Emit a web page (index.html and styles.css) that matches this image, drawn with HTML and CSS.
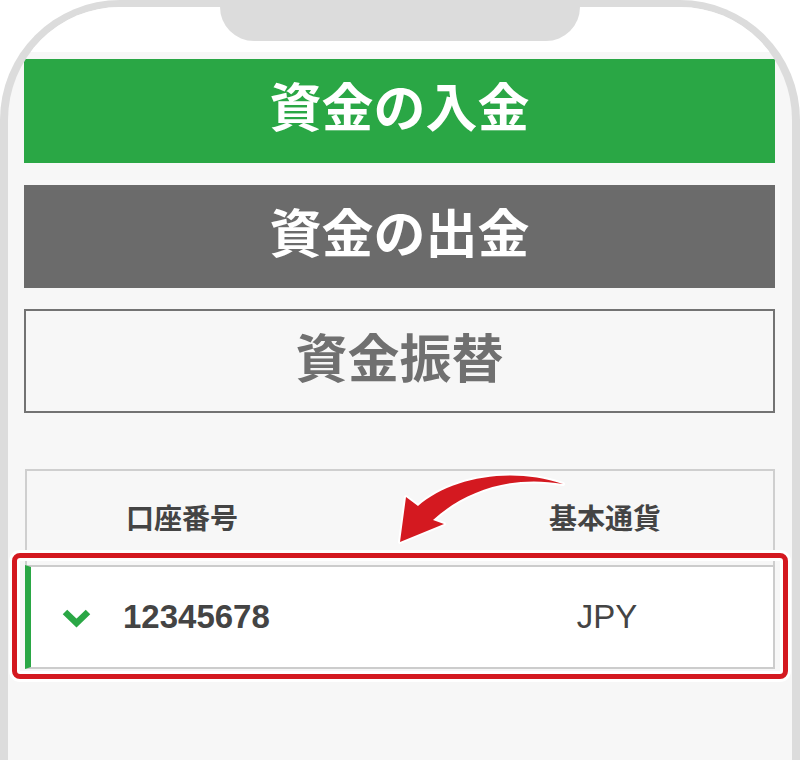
FILE: index.html
```html
<!DOCTYPE html>
<html lang="ja">
<head>
<meta charset="utf-8">
<link rel="stylesheet" href="styles.css">
</head>
<body>
<div class="phone">
  <div class="notch"></div>
  <div class="status"></div>
  <div class="content">
    <div class="btn btn-green">資金の入金</div>
    <div class="btn btn-gray">資金の出金</div>
    <div class="btn btn-outline">資金振替</div>
    <div class="table">
      <div class="thead">
        <div class="th th-left">口座番号</div>
        <div class="th th-right">基本通貨</div>
      </div>
      <div class="row">
        <div class="cell cell-left">
          <svg class="chev" width="34" height="22" viewBox="0 0 34 22"><polyline points="5,5 16.5,16 28,5" fill="none" stroke="#2aa745" stroke-width="6.5" stroke-linejoin="miter"/></svg>
          <span class="acct">12345678</span>
        </div>
        <div class="cell cell-right">JPY</div>
        <div class="highlight"></div>
      </div>
      <svg class="arrow" width="190" height="100" viewBox="0 0 190 100"><path d="M10 82 L16 37 L28 46 C 60 18, 120 6, 173 24 C 122 15, 76 30, 43 60 L 54 64 Z" fill="#d41920" stroke="#ffffff" stroke-width="4" stroke-linejoin="round" paint-order="stroke"/></svg>
    </div>
  </div>
</div>
</body>
</html>
```
FILE: styles.css
```css
html, body {
  margin: 0;
  padding: 0;
  background: #ffffff;
  overflow: hidden;
}
body {
  width: 800px;
  height: 760px;
  font-family: "Noto Sans CJK JP", "Liberation Sans", sans-serif;
}
.phone {
  position: relative;
  width: 800px;
  height: 760px;
  box-sizing: border-box;
  border: 8px solid #dcdcdc;
  border-top-width: 7px;
  border-bottom: none;
  border-radius: 120px 120px 0 0;
  overflow: hidden;
  background: #f7f7f7;
}
.notch {
  position: absolute;
  top: 0;
  left: 212px;
  width: 360px;
  height: 34px;
  background: #dcdcdc;
  border-radius: 0 0 34px 34px;
}
.status {
  height: 45px;
  background: #ffffff;
}
.content {
  padding: 7px 17px 0 16px;
  display: flex;
  flex-direction: column;
}
.btn {
  height: 104px;
  box-sizing: border-box;
  display: flex;
  align-items: center;
  justify-content: center;
  font-size: 52px;
  font-weight: 700;
  line-height: 1;
  padding-bottom: 12px;
}
.btn-green {
  background: #2aa745;
  color: #ffffff;
}
.btn-gray {
  margin-top: 22px;
  height: 103px;
  background: #6b6b6b;
  color: #ffffff;
}
.btn-outline {
  margin-top: 21px;
  border: 2px solid #737373;
  color: #707070;
  padding-bottom: 10px;
}
.table {
  position: relative;
  margin-top: 56px;
  margin-left: 1px;
}
.thead {
  display: grid;
  grid-template-columns: 410px 1fr;
  height: 96px;
  box-sizing: border-box;
  border: 2px solid #cfcfcf;
  border-bottom: none;
  align-items: center;
  color: #444444;
  font-size: 28px;
  font-weight: 700;
}
.th-left {
  padding-left: 99px;
  padding-bottom: 3px;
}
.th-right {
  text-align: center;
  padding-bottom: 3px;
}
.row {
  position: relative;
  display: grid;
  grid-template-columns: 410px 1fr;
  height: 104px;
  box-sizing: border-box;
  background: #ffffff;
  border: 2px solid #cccccc;
  border-left: 6px solid #2aa745;
  align-items: center;
  color: #444444;
}
.cell-left {
  display: flex;
  align-items: center;
}
.chev {
  margin-left: 29px;
  margin-right: 29px;
  margin-top: 2px;
}
.acct {
  font-family: "Liberation Sans", Arial, sans-serif;
  font-weight: 700;
  font-size: 33px;
}
.cell-right {
  font-family: "Liberation Sans", Arial, sans-serif;
  font-size: 33px;
  text-align: center;
}
.highlight {
  position: absolute;
  left: -19px;
  right: -15px;
  top: -14px;
  bottom: -12px;
  border: 5px solid #d41920;
  border-radius: 8px;
  box-shadow: 0 0 0 3px #ffffff, inset 0 0 0 3px #ffffff;
  pointer-events: none;
}
.arrow {
  position: absolute;
  left: 365px;
  top: -9px;
}
```
